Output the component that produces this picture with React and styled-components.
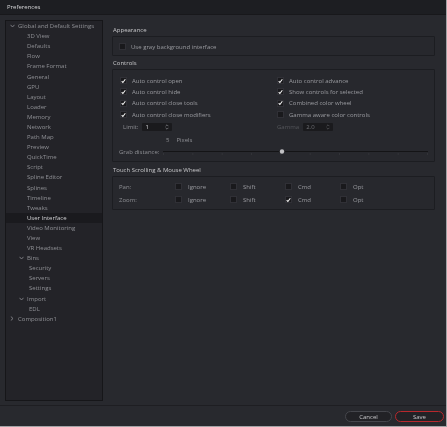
import React from "react";
import styled, { createGlobalStyle } from "styled-components";

const Global = createGlobalStyle`
  html, body { margin: 0; padding: 0; background: #28292e; }
  body {
    font-family: "Open Sans", "Noto Sans", sans-serif;
    -webkit-font-smoothing: antialiased;
  }
  * { box-sizing: border-box; }
`;

const Window = styled.div`
  width: 447px;
  height: 427px;
  background: #28292e;
  border-right: 1px solid #a3a3a6;
  border-bottom: 1px solid #a3a3a6;
  display: flex;
  flex-direction: column;
  font-size: 6px;
  overflow: hidden;
  will-change: transform;
`;

const TitleBar = styled.div`
  height: 15px;
  flex: none;
  background: #1d1e22;
  border-bottom: 1px solid #18181b;
  color: #d6d6d8;
  padding-left: 7px;
  display: flex;
  align-items: center;
  font-size: 6px;
`;

const Body = styled.div`
  flex: 1;
  display: flex;
  min-height: 0;
`;

const TreePanel = styled.div`
  width: 98px;
  margin: 5px 0 4px 5px;
  background: #232328;
  border: 1px solid #161619;
  flex: none;
`;

const TreeRow = styled.div`
  height: 10.1px;
  display: flex;
  align-items: center;
  padding-left: ${(p) => p.$indent}px;
  color: ${(p) => (p.$selected ? "#d2d2d5" : "#8f9095")};
  background: ${(p) => (p.$selected ? "#1a1a1e" : "transparent")};
  white-space: nowrap;
`;

const Chev = styled.span`
  width: 9px;
  flex: none;
  display: flex;
  align-items: center;
  padding-left: 1px;
`;

const Content = styled.div`
  flex: 1;
  padding: 10px 11px 0 9px;
  display: flex;
  flex-direction: column;
`;

const SectionHeader = styled.div`
  height: 10px;
  line-height: 10px;
  color: #c6c6c9;
  padding-left: 1px;
`;

const GroupBox = styled.div`
  margin-top: ${(p) => p.$mt || 1}px;
  margin-bottom: ${(p) => p.$mb || 0}px;
  border: 1px solid #1c1d21;
  border-radius: 1px;
  background: #27282d;
  padding: ${(p) => p.$pad};
`;

const CheckRow = styled.label`
  display: flex;
  align-items: center;
  height: ${(p) => p.$h || 11.3}px;
  gap: ${(p) => p.$gap || 5}px;
  color: #9a9ba0;
  white-space: nowrap;
`;

const Box = styled.span`
  width: 7px;
  height: 7px;
  flex: none;
  background: #19191c;
  border: 1px solid #303036;
  display: flex;
  align-items: center;
  justify-content: center;
`;

const TwoCol = styled.div`
  display: grid;
  grid-template-columns: 157px 1fr;
`;

const Col = styled.div`
  display: flex;
  flex-direction: column;
`;

const SpinRow = styled.div`
  height: ${(p) => p.$h}px;
  display: flex;
  align-items: center;
  gap: 4px;
  padding-left: ${(p) => p.$pl}px;
`;

const SpinLabel = styled.span`
  color: ${(p) => (p.$dim ? "#55565b" : "#8e8f94")};
`;

const Spin = styled.div`
  width: 30px;
  height: 8px;
  background: #1a1a1d;
  border-radius: 1px;
  display: flex;
  align-items: center;
  justify-content: space-between;
  padding: 0 3px 0 3px;
  color: ${(p) => (p.$dim ? "#6f7075" : "#d0d0d3")};
`;

const PixelsRow = styled.div`
  height: 13px;
  display: flex;
  align-items: center;
  padding-left: 46px;
  gap: 7px;
  color: #8e8f94;
`;

const GrabRow = styled.div`
  height: 11px;
  display: flex;
  align-items: center;
  color: #8e8f94;
  margin-left: -1px;
  gap: 4px;
  white-space: nowrap;
`;

const SliderWrap = styled.div`
  flex: none;
  width: 265px;
  display: flex;
  align-items: center;
`;

const TouchGrid = styled.div`
  display: grid;
  grid-template-columns: 55px repeat(4, 55px);
  grid-auto-rows: 13px;
  align-items: center;
  color: #8e8f94;
`;

const TouchLabel = styled.span`
  margin-left: -1px;
`;

const Footer = styled.div`
  height: 21px;
  flex: none;
  border-top: 1px solid #1e1e22;
  display: flex;
  justify-content: flex-end;
  align-items: flex-start;
  padding: 5px 2px 0 0;
  gap: 3px;
`;

const Button = styled.button`
  width: ${(p) => p.$w}px;
  height: 11px;
  border-radius: 6px;
  border: 1px solid ${(p) => (p.$primary ? "#b7282d" : "#45464c")};
  background: #222226;
  color: #c8c8cb;
  font-family: inherit;
  font-size: 6px;
  padding: 0;
  display: flex;
  align-items: center;
  justify-content: center;
`;

const ChevDown = () => (
  <svg width="5" height="4" viewBox="0 0 5 4">
    <path d="M0.5 0.8 L2.5 3 L4.5 0.8" fill="none" stroke="#8f9095" strokeWidth="0.8" />
  </svg>
);
const ChevRight = () => (
  <svg width="4" height="5" viewBox="0 0 4 5">
    <path d="M0.8 0.5 L3 2.5 L0.8 4.5" fill="none" stroke="#8f9095" strokeWidth="0.8" />
  </svg>
);

const Tick = () => (
  <svg width="6" height="6" viewBox="0 0 6 6">
    <path d="M0.8 3.3 L2.3 4.8 L5.2 0.9" fill="none" stroke="#f2f2f2" strokeWidth="1.3" />
  </svg>
);

const Check = ({ checked, label, h, gap }) => (
  <CheckRow $h={h} $gap={gap}>
    <Box>{checked && <Tick />}</Box>
    {label}
  </CheckRow>
);

const Arrows = ({ dim }) => (
  <svg width="4" height="6" viewBox="0 0 4 6">
    <path d="M0.6 2.2 L2 0.8 L3.4 2.2 M0.6 3.8 L2 5.2 L3.4 3.8" fill="none" stroke={dim ? "#5c5d62" : "#8a8b90"} strokeWidth="0.7" />
  </svg>
);

const Slider = () => {
  const w = 265;
  const ticks = Array.from({ length: 10 }, (_, i) => 0.5 + (i * (w - 1)) / 9);
  return (
    <svg width={w} height="8" viewBox={`0 0 ${w} 8`}>
      <line x1="0" y1="3.5" x2={w} y2="3.5" stroke="#141416" strokeWidth="1" />
      {ticks.map((x, i) => (
        <rect key={i} x={x - 0.5} y="5.5" width="1" height="1" fill="#3e3f44" />
      ))}
      <circle cx="119" cy="3.5" r="2.2" fill="#c2c2c5" />
    </svg>
  );
};

const tree = [
  { t: "Global and Default Settings", l: 0, c: "down" },
  { t: "3D View", l: 1 },
  { t: "Defaults", l: 1 },
  { t: "Flow", l: 1 },
  { t: "Frame Format", l: 1 },
  { t: "General", l: 1 },
  { t: "GPU", l: 1 },
  { t: "Layout", l: 1 },
  { t: "Loader", l: 1 },
  { t: "Memory", l: 1 },
  { t: "Network", l: 1 },
  { t: "Path Map", l: 1 },
  { t: "Preview", l: 1 },
  { t: "QuickTime", l: 1 },
  { t: "Script", l: 1 },
  { t: "Spline Editor", l: 1 },
  { t: "Splines", l: 1 },
  { t: "Timeline", l: 1 },
  { t: "Tweaks", l: 1 },
  { t: "User Interface", l: 1, s: true },
  { t: "Video Monitoring", l: 1 },
  { t: "View", l: 1 },
  { t: "VR Headsets", l: 1 },
  { t: "Bins", l: 1, c: "down" },
  { t: "Security", l: 2 },
  { t: "Servers", l: 2 },
  { t: "Settings", l: 2 },
  { t: "Import", l: 1, c: "down" },
  { t: "EDL", l: 2 },
  { t: "Composition1", l: 0, c: "right" },
];

const indents = [3, 12, 23];

export default function App() {
  return (
    <>
      <Global />
      <Window>
        <TitleBar>Preferences</TitleBar>
        <Body>
          <TreePanel>
            {tree.map((n, i) => (
              <TreeRow key={i} $indent={indents[n.l]} $selected={n.s}>
                {n.l < 2 && (
                  <Chev>{n.c === "down" ? <ChevDown /> : n.c === "right" ? <ChevRight /> : null}</Chev>
                )}
                {n.t}
              </TreeRow>
            ))}
          </TreePanel>
          <Content>
            <SectionHeader>Appearance</SectionHeader>
            <GroupBox $mt={1} $mb={2} $pad="1px 6px 0 6px">
              <Check label="Use gray background interface" h={17} gap={5} />
            </GroupBox>
            <SectionHeader>Controls</SectionHeader>
            <GroupBox $mt={1} $mb={3} $pad="5px 6px 4px 7px">
              <TwoCol>
                <Col>
                  <Check checked label="Auto control open" />
                  <Check checked label="Auto control hide" />
                  <Check checked label="Auto control close tools" />
                  <Check checked label="Auto control close modifiers" />
                </Col>
                <Col>
                  <Check checked label="Auto control advance" />
                  <Check checked label="Show controls for selected" />
                  <Check checked label="Combined color wheel" />
                  <Check label="Gamma aware color controls" />
                </Col>
              </TwoCol>
              <TwoCol>
                <SpinRow $h={13} $pl={3}>
                  <SpinLabel>Limit:</SpinLabel>
                  <Spin>
                    1
                    <Arrows />
                  </Spin>
                </SpinRow>
                <SpinRow $h={13} $pl={0}>
                  <SpinLabel $dim>Gamma</SpinLabel>
                  <Spin $dim>
                    2.0
                    <Arrows dim />
                  </Spin>
                </SpinRow>
              </TwoCol>
              <PixelsRow>
                <span>5</span>
                <span>Pixels</span>
              </PixelsRow>
              <GrabRow>
                <span>Grab distance:</span>
                <SliderWrap>
                  <Slider />
                </SliderWrap>
              </GrabRow>
            </GroupBox>
            <SectionHeader>Touch Scrolling &amp; Mouse Wheel</SectionHeader>
            <GroupBox $mt={1} $pad="3px 6px 3px 7px">
              <TouchGrid>
                <TouchLabel>Pan:</TouchLabel>
                <Check label="Ignore" h={13} gap={6} />
                <Check label="Shift" h={13} gap={6} />
                <Check label="Cmd" h={13} gap={6} />
                <Check label="Opt" h={13} gap={6} />
                <TouchLabel>Zoom:</TouchLabel>
                <Check label="Ignore" h={13} gap={6} />
                <Check label="Shift" h={13} gap={6} />
                <Check checked label="Cmd" h={13} gap={6} />
                <Check label="Opt" h={13} gap={6} />
              </TouchGrid>
            </GroupBox>
          </Content>
        </Body>
        <Footer>
          <Button $w={47}>Cancel</Button>
          <Button $w={49} $primary>
            Save
          </Button>
        </Footer>
      </Window>
    </>
  );
}
